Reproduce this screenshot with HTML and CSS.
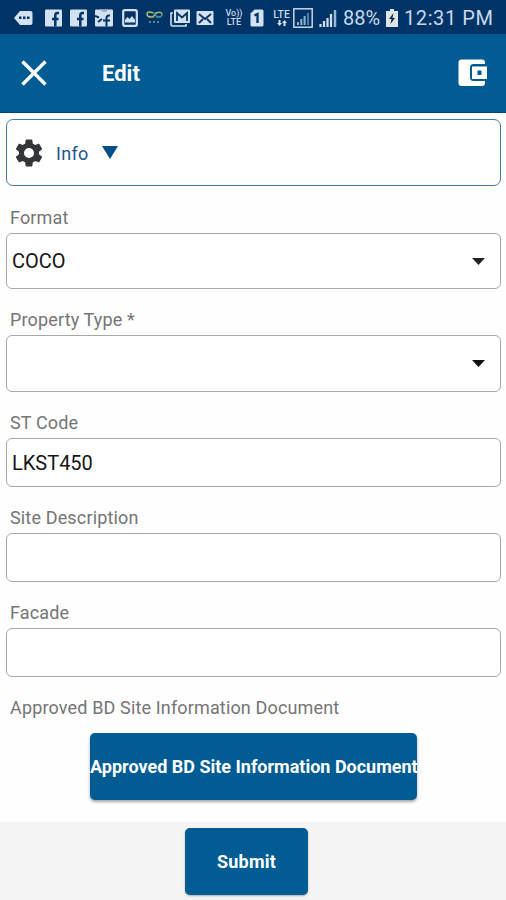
FILE: index.html
```html
<!DOCTYPE html>
<html lang="en">
<head>
<meta charset="utf-8">
<title>Edit</title>
<link rel="stylesheet" href="styles.css">
</head>
<body>
<div class="status">
  <svg class="tag" width="19" height="18" viewBox="0 0 19 18"><path d="M6 2h10.500q2 0 2 2v10q0 2-2 2H6L0 9z" fill="#d3e0f0"/><path d="M5 7.500h2.500V10H5zM9 7.500h2.500V10H9zM13 7.500h2.500V10H13z" fill="#003366"/></svg>
  <svg class="fb" width="17" height="18" viewBox="0 0 17 18"><rect y=".5" width="17" height="17" rx="1" fill="#d3e0f0"/><path d="M14 4h-1.500Q10.300 4 10.300 6.500V17.500M7 10h6.500" fill="none" stroke="#003366" stroke-width="2.500"/></svg>
  <svg class="fb2" width="17" height="18" viewBox="0 0 17 18"><rect y=".5" width="17" height="17" rx="1" fill="#d3e0f0"/><path d="M14 4h-1.500Q10.300 4 10.300 6.500V17.500M7 10h6.500" fill="none" stroke="#003366" stroke-width="2.500"/></svg>
  <svg class="fb3" width="18" height="18" viewBox="0 0 18 18"><rect y=".5" width="18" height="17" rx="1" fill="#d3e0f0"/><path d="M5 0q4 6 9 0" fill="#8ba5c4"/><path d="M15 6.500h-1Q11.500 6.500 11.500 9v8.500M8 11.500h7M0 7l4 1.500M3 13l4-3" fill="none" stroke="#003366" stroke-width="2"/></svg>
  <svg class="photo" width="16" height="18" viewBox="0 0 16 18"><rect x="1.200" y="1.200" width="13.600" height="15.600" rx="1.500" fill="none" stroke="#d3e0f0" stroke-width="2.200"/><path d="M3 13.500V11l2.500-3 2 2L10 7l3 4v2.500z" fill="#d3e0f0"/></svg>
  <svg class="loop" width="17" height="18" viewBox="0 0 17 18"><path d="M7.500 4Q1 1.500 1 5t6 3l3-4q6-2 6 1.500" fill="none" stroke="#b5b96a" stroke-width="1.500"/><path d="M8 4l3 4q5 .5 5-3" fill="none" stroke="#3a98a8" stroke-width="1.500"/><path d="M3 13h2m2 0h2m2 0h2" stroke="#7c9bb7" stroke-width="1.500"/></svg>
  <svg class="mails" width="20" height="18" viewBox="0 0 20 18"><path d="M3 4H1v11.500q0 1.500 1.500 1.500H16v-2" fill="none" stroke="#d3e0f0" stroke-width="1.600"/><rect x="4" y=".5" width="16" height="13.500" rx="1" fill="#d3e0f0"/><path d="M7 12V4l5 4.500L17 4v8" fill="none" stroke="#003366" stroke-width="1.800"/></svg>
  <svg class="mail" width="18" height="18" viewBox="0 0 18 18"><rect x=".5" y="2" width="17" height="14" rx="1" fill="#d3e0f0"/><path d="M3 5l6 5 6-5M3 14l4-4M15 14l-4-4" fill="none" stroke="#003366" stroke-width="1.800"/></svg>
  <div class="volte"><span>Vo))</span><span>LTE</span></div>
  <svg class="sim" width="14" height="18" viewBox="0 0 14 18"><path d="M4.500.5H12q1.500 0 1.500 1.500v14q0 1.500-1.500 1.500H2Q.5 17.500.5 16V4.500z" fill="#d3e0f0"/><path d="M4.500 6.500L7.500 5v9" fill="none" stroke="#003366" stroke-width="2.300"/></svg>
  <div class="lte"><span>LTE</span><svg width="10" height="6" viewBox="0 0 10 6"><path d="M2.500 6L0 3h1.500V0h2v3H5zM7.500 0L10 3H8.500v3h-2V3H5z" fill="#d3e0f0"/></svg></div>
  <svg class="sigbox" width="20" height="20" viewBox="0 0 20 20"><rect x=".8" y=".8" width="18.400" height="18.400" fill="none" stroke="#d3e0f0" stroke-width="1.400"/><path d="M5 17v-3M8.300 17v-6M11.600 17V8" stroke="#91b3d2" stroke-width="2"/><path d="M15 17V5" stroke="#507ba7" stroke-width="2"/></svg>
  <svg class="sig" width="18" height="18" viewBox="0 0 18 18"><path d="M1.500 18v-3M5 18v-6M8.500 18V9M12 18V5" stroke="#d3e0f0" stroke-width="2.200"/><path d="M16 18V1" stroke="#9cb5d2" stroke-width="2.500"/></svg>
  <span class="percent">88%</span>
  <svg class="battery" width="12" height="18" viewBox="0 0 12 18"><path d="M4 0h4v2h4v16H0V2h4z" fill="#dce5e8"/><path d="M7.500 4L3 10h2.500L4.500 15 9 9H6.500z" fill="#15263a"/></svg>
  <span class="time">12:31 PM</span>
</div>
<header class="bar">
  <svg class="close" width="28" height="28" viewBox="0 0 28 28"><path d="M2.500 2.500l23 23M25.500 2.500l-23 23" stroke="#fff" stroke-width="3.400"/></svg>
  <h1>Edit</h1>
  <svg class="wallet" width="30" height="28" viewBox="0 0 30 28"><path d="M3.500.5H24Q27 .5 27 3.500V5H15.500Q12 5 12 8.500v10q0 3.500 3.500 3.500H27v2q0 3-3 3H3.500q-3 0-3-3v-20.500q0-3 3-3z" fill="#fff"/><path fill-rule="evenodd" d="M14 7.500h15V20H14zM19.500 11.500v4.500h4v-4.500z" fill="#fff"/></svg>
</header>
<main class="form">
  <div class="info">
    <svg width="28" height="28" viewBox="2 2 20 20"><path fill="#333538" d="M19.140 12.940c.04-.3.060-.61.060-.94s-.02-.64-.07-.94l2.030-1.580a.49.49 0 0 0 .12-.61l-1.920-3.320a.49.49 0 0 0-.59-.22l-2.390.96a7 7 0 0 0-1.620-.94l-.36-2.540A.48.48 0 0 0 13.920 2.400h-3.840a.48.48 0 0 0-.47.410l-.36 2.540c-.59.24-1.130.57-1.620.94l-2.390-.96a.48.48 0 0 0-.59.22L2.740 8.870a.48.48 0 0 0 .12.610l2.030 1.580a6 6 0 0 0 0 1.880l-2.030 1.580a.49.49 0 0 0-.12.610l1.920 3.320c.12.220.37.290.59.220l2.390-.96c.5.380 1.030.7 1.620.94l.36 2.540c.05.240.24.410.47.410h3.840c.24 0 .44-.17.470-.41l.36-2.540a7 7 0 0 0 1.620-.94l2.390.96c.22.080.47 0 .59-.22l1.920-3.320a.48.48 0 0 0-.12-.61zM12 15.600A3.600 3.600 0 1 1 12 8.400a3.600 3.600 0 0 1 0 7.200z"/></svg>
    <span>Info</span>
    <svg class="down" width="16" height="13" viewBox="0 0 16 13"><path d="M0 0h16L8 13z" fill="#005087"/></svg>
  </div>
  <label>Format</label>
  <div class="field select"><span class="coco">COCO</span><svg width="13" height="7" viewBox="0 0 13 7"><path d="M0 0h13L6.500 7z" fill="#222"/></svg></div>
  <label>Property Type *</label>
  <div class="field select second"><span></span><svg width="13" height="7" viewBox="0 0 13 7"><path d="M0 0h13L6.500 7z" fill="#111"/></svg></div>
  <label>ST Code</label>
  <div class="field"><span class="code">LKST450</span></div>
  <label>Site Description</label>
  <div class="field"></div>
  <label>Facade</label>
  <div class="field"></div>
  <label>Approved BD Site Information Document</label>
  <button class="document">Approved BD Site Information Document</button>
</main>
<footer><button class="submit">Submit</button></footer>
</body>
</html>
```
FILE: styles.css
```css
* { box-sizing: border-box; }
body {
  margin: 0;
  width: 506px;
  height: 900px;
  overflow: hidden;
  display: flex;
  flex-direction: column;
  background: #fefefe;
  font-family: Roboto, "Liberation Sans", sans-serif;
}
svg { display: block; flex: none; }

.status {
  height: 34px;
  flex: none;
  display: flex;
  align-items: center;
  padding: 1px 0 0 14px;
  background: #003366;
  color: #c9d8ea;
  white-space: nowrap;
}
.fb { margin-left: 12px; }
.fb2, .fb3 { margin-left: 8px; }
.photo { margin-left: 9px; }
.loop { margin-left: 8px; }
.mails { margin-left: 7px; }
.mail { margin-left: 6px; }
.volte {
  width: 18px;
  margin-left: 11px;
  display: flex;
  flex-direction: column;
  align-items: center;
  font-size: 9px;
  line-height: 9px;
  font-weight: 500;
}
.sim { margin-left: 7px; }
.lte {
  width: 19px;
  margin-left: 8px;
  display: flex;
  flex-direction: column;
  align-items: center;
  font-size: 10.5px;
  line-height: 11px;
  font-weight: 500;
}
.sigbox { margin-left: 2px; }
.sig { margin-left: 6px; }
.percent { width: 40px; margin-left: 6px; font-size: 20px; }
.battery { margin-left: 3px; }
.time { margin-left: 6px; font-size: 20px; letter-spacing: .6px; }

.bar {
  height: 79px;
  flex: none;
  display: flex;
  align-items: center;
  padding: 0 18px 0 20px;
  background: #005c93;
  border-bottom: 1px solid #00447c;
}
.bar h1 {
  margin: 2px auto 0 54px;
  color: #fff;
  font-size: 22px;
  font-weight: 700;
  line-height: 26px;
}

.form {
  flex: 1;
  display: flex;
  flex-direction: column;
  padding: 6px 5px 0 6px;
}
.info {
  height: 67px;
  margin-bottom: 16px;
  display: flex;
  align-items: center;
  padding-left: 8px;
  border: 1px solid #4779a3;
  border-radius: 7px;
  background: #fff;
  color: #22558a;
  font-size: 18px;
  letter-spacing: .3px;
}
.info span { margin: 2px 13px 0 13px; }
.form label {
  height: 31px;
  flex: none;
  padding: 6px 0 0 4px;
  color: #757575;
  font-size: 18px;
  line-height: 20px;
  letter-spacing: .15px;
  white-space: nowrap;
}
.field {
  height: 49px;
  flex: none;
  margin-bottom: 15px;
  display: flex;
  align-items: center;
  padding: 0 15px 0 5px;
  border: 1px solid #a8a8a8;
  border-radius: 6px;
  background: #fff;
  color: #151515;
  font-size: 20px;
}
.select { height: 56px; justify-content: space-between; }
.second { height: 57px; }

button {
  display: block;
  padding: 0;
  border: 0;
  border-radius: 5px;
  background: #005c93;
  color: #fff;
  font-family: inherit;
  font-size: 18px;
  font-weight: 700;
  white-space: nowrap;
  box-shadow: 0 2px 3px rgba(0, 0, 0, .35);
}
.document {
  width: 327px;
  height: 67px;
  margin: 10px 0 0 84px;
}
footer {
  height: 78px;
  flex: none;
  padding: 6px 0 0 185px;
  background: #f4f4f4;
}
.submit {
  width: 123px;
  height: 67px;
  letter-spacing: .2px;
  box-shadow: 0 1px 2px rgba(0, 0, 0, .3);
}
```
